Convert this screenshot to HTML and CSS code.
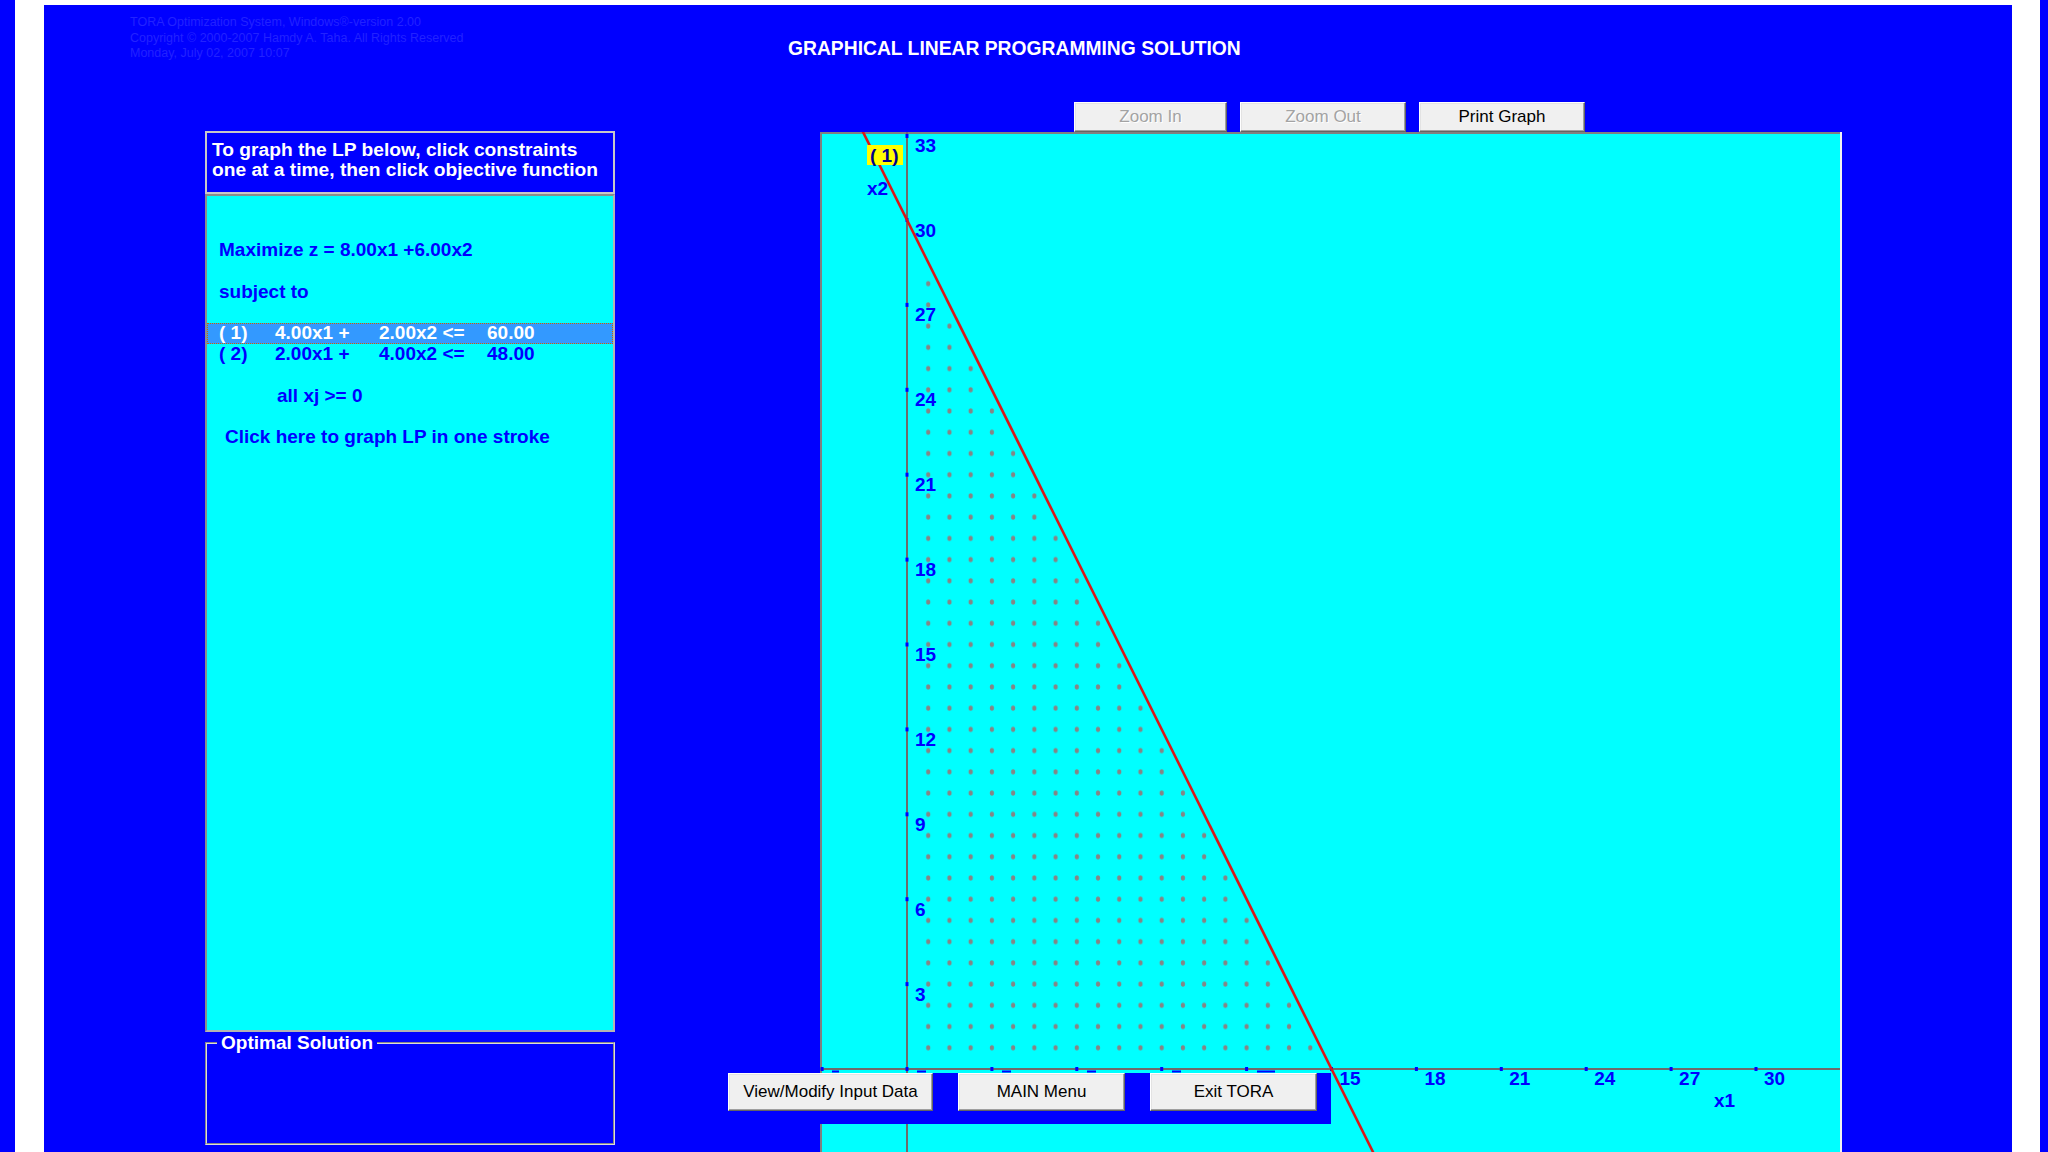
FILE: index.html
```html
<!DOCTYPE html>
<html lang="en">
<head>
<meta charset="utf-8">
<title>TORA - Graphical Linear Programming Solution</title>
<link rel="stylesheet" href="styles.css">
</head>
<body>
<div class="edge-l"></div>
<div class="gutter-l"></div>
<main class="app">
  <header class="top">
    <div class="copyright">
      <div>TORA Optimization System, Windows®-version 2.00</div>
      <div>Copyright © 2000-2007 Hamdy A. Taha. All Rights Reserved</div>
      <div>Monday, July 02, 2007 10:07</div>
    </div>
    <h1 class="title">GRAPHICAL LINEAR PROGRAMMING SOLUTION</h1>
  </header>
  <div class="content">
    <section class="lp-col">
      <div class="hint">To graph the LP below, click constraints<br>one at a time, then click objective function</div>
      <div class="listbox">
        <div class="li">Maximize z = 8.00x1 +6.00x2</div>
        <div class="li"></div>
        <div class="li">subject to</div>
        <div class="li"></div>
        <div class="li sel"><span class="c1">( 1)</span><span class="c2">4.00x1 +</span><span class="c3">2.00x2 &lt;=</span><span>60.00</span></div>
        <div class="li"><span class="c1">( 2)</span><span class="c2">2.00x1 +</span><span class="c3">4.00x2 &lt;=</span><span>48.00</span></div>
        <div class="li"></div>
        <div class="li indent">all xj &gt;= 0</div>
        <div class="li"></div>
        <div class="li link">Click here to graph LP in one stroke</div>
      </div>
      <fieldset class="optimal"><legend>Optimal Solution</legend></fieldset>
    </section>
    <section class="graph-col">
      <div class="toolbar">
        <button class="btn disabled zoom-in">Zoom In</button>
        <button class="btn disabled zoom-out">Zoom Out</button>
        <button class="btn print">Print Graph</button>
      </div>
      <div class="plot">
        <svg class="plot-svg" width="1022" height="1020" viewBox="0 0 1022 1020">
          <defs>
            <pattern id="dots" patternUnits="userSpaceOnUse" x="76.3875" y="926.3875" width="21.225" height="21.225">
              <ellipse cx="10.6125" cy="10.6125" rx="2.1" ry="2.7" fill="#858585"/>
            </pattern>
          </defs>
          <rect x="0" y="0" width="1022" height="1020" fill="#00ffff"/>
          <polygon points="97.6,926.4 97.6,117.7 501.9,926.4" fill="url(#dots)"/>
          <rect x="0" y="0" width="1022" height="2" fill="#808080"/>
          <rect x="0" y="0" width="2" height="1020" fill="#808080"/>
          <rect x="1020" y="0" width="2" height="1020" fill="#f2f2f2"/>
          <line x1="0" y1="937" x2="1020" y2="937" stroke="#6e6a6a" stroke-width="2"/>
          <line x1="87" y1="0" x2="87" y2="1020" stroke="#6e6a6a" stroke-width="2"/>
          <g class="ticks">
            <rect x="85.5" y="850.1" width="3" height="4"/>
            <rect x="85.5" y="765.2" width="3" height="4"/>
            <rect x="85.5" y="680.3" width="3" height="4"/>
            <rect x="85.5" y="595.4" width="3" height="4"/>
            <rect x="85.5" y="510.5" width="3" height="4"/>
            <rect x="85.5" y="425.6" width="3" height="4"/>
            <rect x="85.5" y="340.7" width="3" height="4"/>
            <rect x="85.5" y="255.8" width="3" height="4"/>
            <rect x="85.5" y="170.9" width="3" height="4"/>
            <rect x="85.5" y="86" width="3" height="4"/>
            <rect x="85.5" y="2" width="3" height="4"/>
            <rect x="0.6" y="935" width="3" height="4"/>
            <rect x="85.5" y="935" width="3" height="4"/>
            <rect x="170.4" y="935" width="3" height="4"/>
            <rect x="255.3" y="935" width="3" height="4"/>
            <rect x="340.2" y="935" width="3" height="4"/>
            <rect x="425.1" y="935" width="3" height="4"/>
            <rect x="510" y="935" width="3" height="4"/>
            <rect x="594.9" y="935" width="3" height="4"/>
            <rect x="679.8" y="935" width="3" height="4"/>
            <rect x="764.7" y="935" width="3" height="4"/>
            <rect x="849.6" y="935" width="3" height="4"/>
            <rect x="934.5" y="935" width="3" height="4"/>
          </g>
          <g class="ticks peeks">
            <rect x="12" y="938.5" width="7" height="2"/>
            <rect x="97" y="938.5" width="9" height="2"/>
            <rect x="182" y="938.5" width="9" height="2"/>
            <rect x="267" y="938.5" width="9" height="2"/>
            <rect x="352" y="938.5" width="9" height="2"/>
            <rect x="437" y="938.5" width="18" height="2"/>
          </g>
          <g class="ax-lbl">
            <text x="95" y="868.6">3</text>
            <text x="95" y="783.7">6</text>
            <text x="95" y="698.8">9</text>
            <text x="95" y="613.9">12</text>
            <text x="95" y="529">15</text>
            <text x="95" y="444.1">18</text>
            <text x="95" y="359.2">21</text>
            <text x="95" y="274.3">24</text>
            <text x="95" y="189.4">27</text>
            <text x="95" y="104.5">30</text>
            <text x="95" y="19.6">33</text>
            <text x="519.5" y="953">15</text>
            <text x="604.4" y="953">18</text>
            <text x="689.3" y="953">21</text>
            <text x="774.2" y="953">24</text>
            <text x="859.1" y="953">27</text>
            <text x="944" y="953">30</text>
            <text x="894" y="975">x1</text>
            <text x="47" y="63">x2</text>
          </g>
          <line x1="30.4" y1="-25.2" x2="568.1" y2="1050.2" stroke="#d81818" stroke-width="2.6"/>
          <rect x="47" y="13" width="36" height="20" fill="#ffff00"/>
          <text class="tag-lbl" x="50" y="30">( 1)</text>
        </svg>
      </div>
      <div class="actions">
        <button class="btn view-btn">View/Modify Input Data</button>
        <button class="btn menu-btn">MAIN Menu</button>
        <button class="btn exit-btn">Exit TORA</button>
      </div>
    </section>
  </div>
</main>
<div class="gutter-r"></div>
<div class="edge-r"></div>
</body>
</html>
```

FILE: styles.css
```css
html, body {
  margin: 0;
  padding: 0;
}

body {
  width: 2048px;
  height: 1152px;
  overflow: hidden;
  display: flex;
  background: #ffffff;
  font-family: "Liberation Sans", Arial, sans-serif;
}

.edge-l {
  width: 15px;
  flex: none;
  background: #0000ff;
}

.gutter-l {
  width: 29px;
  flex: none;
}

.app {
  width: 1968px;
  flex: none;
  margin-top: 5px;
  background: #0000ff;
  position: relative;
}

.gutter-r {
  width: 28px;
  flex: none;
}

.edge-r {
  width: 8px;
  flex: none;
  background: #0000ff;
}

/* header */
.top {
  display: flex;
  align-items: flex-start;
  height: 97px;
}

.copyright {
  margin-left: 86px;
  width: 658px;
  padding-top: 10px;
  font-size: 12.5px;
  line-height: 15.5px;
  color: #2222ff;
  white-space: nowrap;
}

.title {
  margin: 34px 0 0;
  font-size: 19.3px;
  line-height: 20px;
  font-weight: bold;
  color: #ffffff;
  white-space: nowrap;
}

.content {
  display: flex;
  align-items: flex-start;
}

/* left column */
.lp-col {
  width: 410px;
  flex: none;
  margin-left: 161px;
  margin-top: 29px;
}

.hint {
  border: 2px solid #c8c8c8;
  padding: 7px 5px 12px;
  color: #ffffff;
  font-weight: bold;
  font-size: 19.2px;
  line-height: 20px;
  white-space: nowrap;
}

.listbox {
  box-sizing: border-box;
  height: 838px;
  background: #00ffff;
  border: 2px solid #b4b4b4;
  border-top-color: #8c8c8c;
  border-left-color: #8c8c8c;
  padding-top: 44px;
  color: #0000ff;
  font-weight: bold;
  font-size: 19px;
}

.li {
  height: 20.8px;
  line-height: 20.8px;
  padding-left: 12px;
  white-space: nowrap;
}

.sel {
  background: #3399ff;
  color: #ffffff;
  outline: 1px dotted #cc6600;
  outline-offset: -1px;
}

.c1, .c2, .c3 {
  display: inline-block;
}

.c1 { width: 56px; }
.c2 { width: 104px; }
.c3 { width: 108px; }

.indent { padding-left: 70px; }
.link { padding-left: 18px; }

.optimal {
  box-sizing: border-box;
  margin: 1px 0 0;
  padding: 0;
  min-width: 0;
  height: 112px;
  border: 2px groove #dcdcdc;
}

.optimal legend {
  margin-left: 10px;
  padding: 0 4px;
  color: #ffffff;
  font-weight: bold;
  font-size: 19px;
  line-height: 20px;
}

/* right column */
.graph-col {
  width: 1022px;
  flex: none;
  margin-left: 205px;
  position: relative;
}

.toolbar {
  display: flex;
  gap: 13px;
  margin-left: 254px;
  height: 30px;
}

.btn {
  box-sizing: border-box;
  margin: 0;
  padding: 0;
  font-family: "Liberation Sans", Arial, sans-serif;
  font-size: 17px;
  color: #000000;
  background: #f0f0f0;
  border: 1px solid;
  border-color: #ffffff #646464 #646464 #ffffff;
  box-shadow: inset -1px -1px 0 #a0a0a0, inset 1px 1px 0 #e3e3e3;
  border-radius: 0;
  white-space: nowrap;
}

.btn.disabled {
  color: #a3a3a3;
  text-shadow: 1px 1px 0 #ffffff;
}

.toolbar .btn { height: 30px; }
.zoom-in { width: 153px; }
.zoom-out { width: 166px; }
.print { width: 166px; }

.plot {
  height: 1020px;
}

.plot-svg {
  display: block;
}

.ticks rect {
  fill: #0000ff;
}

.ax-lbl text {
  font-family: "Liberation Sans", Arial, sans-serif;
  font-weight: bold;
  font-size: 19px;
  fill: #0000ff;
}

.tag-lbl {
  font-family: "Liberation Sans", Arial, sans-serif;
  font-weight: bold;
  font-size: 19px;
  fill: #00008c;
}

.actions {
  position: absolute;
  left: -104px;
  top: 971px;
  display: flex;
  gap: 25px;
  padding: 0 14px 13px 12px;
  background: #0000ff;
}

.actions .btn { height: 38px; }
.view-btn { width: 205px; }
.menu-btn { width: 167px; }
.exit-btn { width: 167px; }
```
